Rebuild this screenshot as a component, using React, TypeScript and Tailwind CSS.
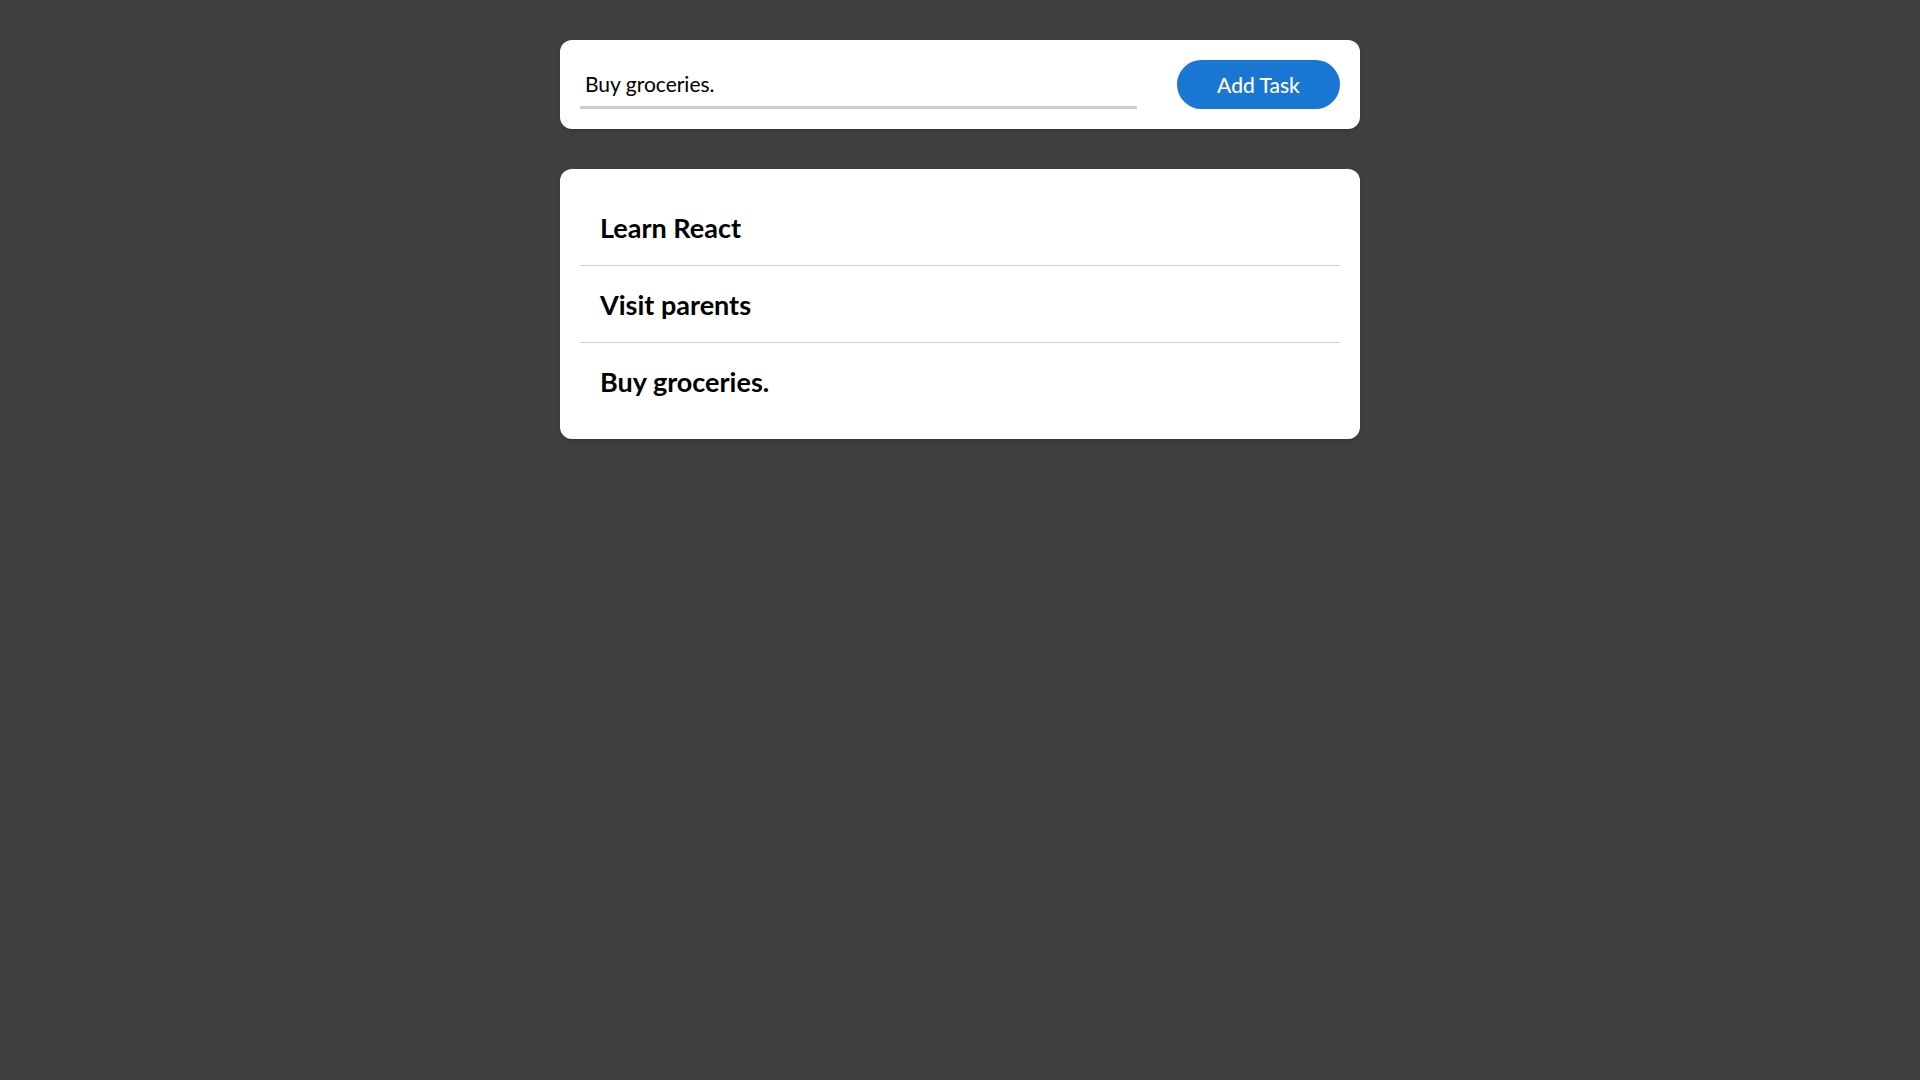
import { useState } from 'react';

const initialTasks = ['Learn React', 'Visit parents', 'Buy groceries.'];

export default function App() {
  const [tasks, setTasks] = useState(initialTasks);
  const [text, setText] = useState('Buy groceries.');

  const addTask = () => {
    if (!text.trim()) return;
    setTasks([...tasks, text.trim()]);
    setText('');
  };

  return (
    <div className="min-h-screen bg-[#404040] pt-10 font-['Lato',sans-serif]">
      <div className="mx-auto w-[800px] space-y-10">
        <div className="flex items-center gap-10 rounded-xl bg-white p-5 shadow-md">
          <input
            value={text}
            onChange={(e) => setText(e.target.value)}
            className="h-[49px] flex-1 border-b-[3px] border-[#cccccc] px-[5px] text-[21px] text-black outline-none"
          />
          <button
            onClick={addTask}
            className="h-[49px] w-[163px] rounded-full bg-[#1976d2] text-[21px] font-medium text-white"
          >
            Add Task
          </button>
        </div>

        <ul className="rounded-xl bg-white p-5 shadow-md">
          {tasks.map((task, i) => (
            <li
              key={i}
              className="border-b border-[#cccccc] px-5 pt-[21px] pb-[19px] text-[27px] leading-9 font-bold text-black last:border-b-0"
            >
              {task}
            </li>
          ))}
        </ul>
      </div>
    </div>
  );
}
